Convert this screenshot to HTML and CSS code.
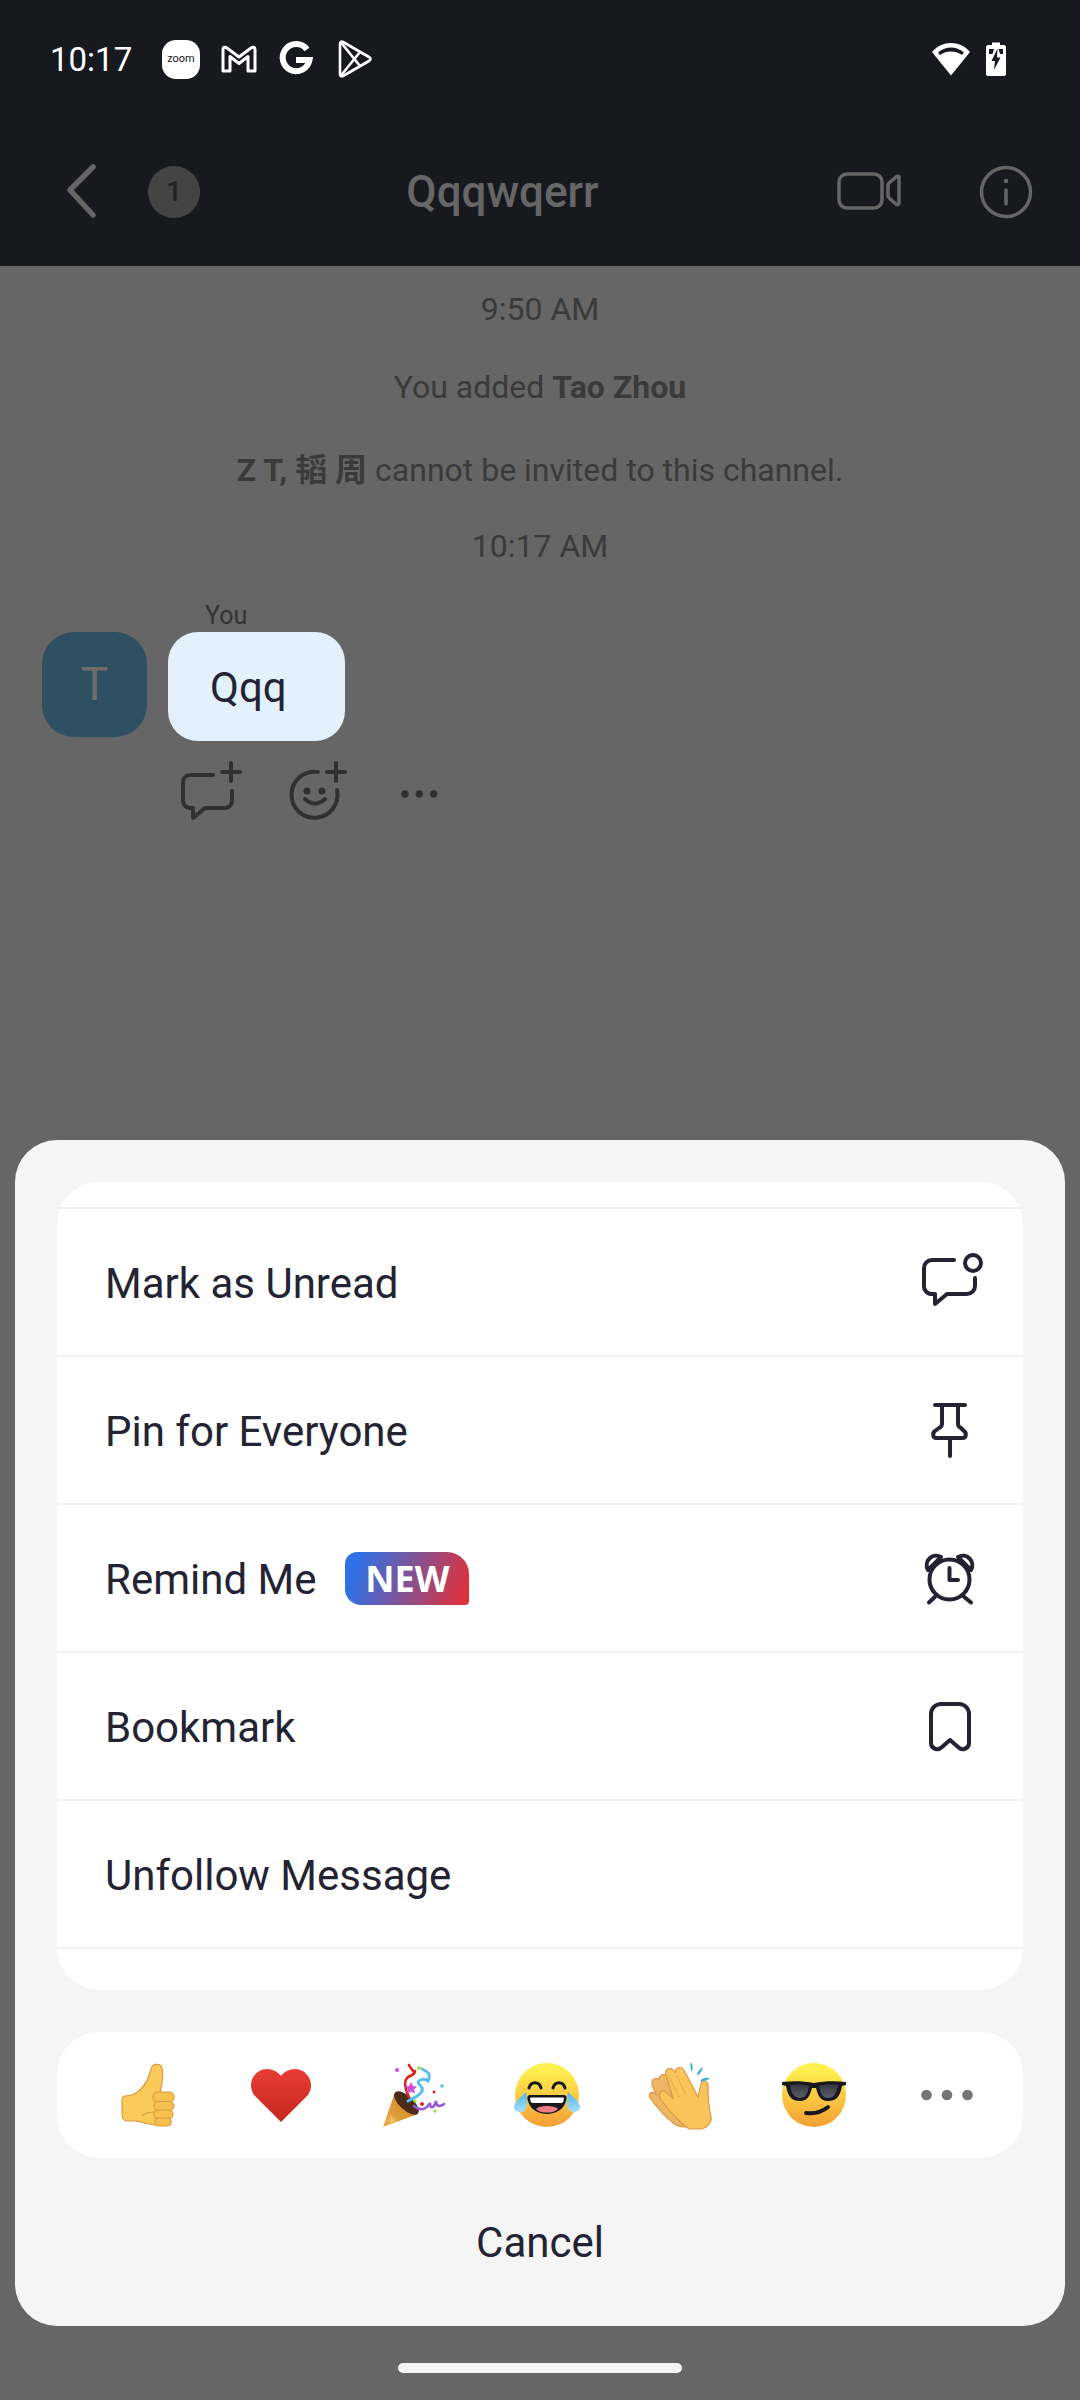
FILE: index.html
```html
<!DOCTYPE html>
<html lang="en">
<head>
    <meta charset="UTF-8">
    <meta name="viewport" content="width=device-width, initial-scale=1.0">
    <title>Qqqwqerr</title>
    <link rel="stylesheet" href="styles.css">
</head>
<body>
    <svg class="defs" aria-hidden="true">
        <defs>
            <linearGradient id="face" x1="0" y1="0" x2="0" y2="1">
                <stop offset="0.1" stop-color="#fff04f"/>
                <stop offset="1" stop-color="#f49e35"/>
            </linearGradient>
            <linearGradient id="heart" x1="0" y1="0" x2="0" y2="1">
                <stop offset="0" stop-color="#ea3d35"/>
                <stop offset="1" stop-color="#c4281b"/>
            </linearGradient>
            <linearGradient id="tear" x1="0" y1="0" x2="0" y2="1">
                <stop offset="0" stop-color="#4fb4ea"/>
                <stop offset="1" stop-color="#a8e0fb"/>
            </linearGradient>
            <linearGradient id="cone" x1="0" y1="1" x2="1" y2="0">
                <stop offset="0" stop-color="#eeb14a"/>
                <stop offset="1" stop-color="#c4791c"/>
            </linearGradient>
            <linearGradient id="lens" x1="0" y1="0" x2="0" y2="1">
                <stop offset="0" stop-color="#33353f"/>
                <stop offset="1" stop-color="#5b5d68"/>
            </linearGradient>
        </defs>
    </svg>

    <div class="topbar">
        <div class="statusbar">
            <span class="clock">10:17</span>
            <span class="zoom-icon">zoom</span>
            <svg class="st-gmail" width="36" height="28" viewBox="0 0 36 28" fill="none" stroke="#fff" stroke-width="3" stroke-linejoin="round">
                <path d="M2 4.5 C2 2 4 1.500 6 3 L18 12 L30 3 C32 1.500 34 2 34 4.500 V26 H27 V11.500 L18 18.500 L9 11.500 V26 H2 Z"/>
            </svg>
            <svg class="st-google" width="34" height="34" viewBox="0 0 34 34" fill="none" stroke="#fff" stroke-width="6">
                <path d="M28 7.500 A13.500 13.500 0 1 0 30.500 18 H17"/>
            </svg>
            <svg class="st-play" width="34" height="38" viewBox="0 0 34 38" fill="none" stroke="#fff" stroke-width="2.600" stroke-linejoin="round">
                <path d="M2 3.500 C2 2 3.500 1 5 2 L31 17 C33 18 33 20 31 21 L5 36 C3.500 37 2 36 2 34.500 Z"/>
                <path d="M3 2.500 L22 26 M3 35.500 L22 12"/>
            </svg>
            <span class="status-spacer"></span>
            <svg class="st-wifi" width="40" height="34" viewBox="0 0 40 34">
                <path fill="#fff" d="M20 33.500 L1 10 C6 4 13 1 20 1 C27 1 34 4 39 10 Z"/>
                <path fill="#17191f" d="M7 10.500 C11 7 15.500 5.500 20 5.500 C24.500 5.500 29 7 33 10.500 L31 13 C27.500 10.500 24 9.500 20 9.500 C16 9.500 12.500 10.500 9 13 Z"/>
            </svg>
            <svg class="st-battery" width="20" height="34" viewBox="0 0 20 34">
                <path fill="#fff" d="M6 0.500 H14 V3 H18 C19 3 20 4 20 5 V32 C20 33 19 34 18 34 H2 C1 34 0 33 0 32 V5 C0 4 1 3 2 3 H6 Z"/>
                <path fill="#17191f" d="M3 7 H8 L6.500 12 H3 Z M12.500 7 H17 V12 H14 Z"/>
                <path fill="#17191f" d="M11.500 6.500 L5.500 19 H9 L8 28 L14.500 15.500 H11 Z"/>
            </svg>
        </div>
        <div class="chat-header">
            <svg class="back-icon" width="34" height="58" viewBox="0 0 34 58" fill="none" stroke="#666" stroke-width="5.500" stroke-linecap="round" stroke-linejoin="round">
                <path d="M28 4 L5 27 L28 52"/>
            </svg>
            <span class="unread-badge">1</span>
            <h1 class="chat-title">Qqqwqerr</h1>
            <svg class="video-icon" width="64" height="40" viewBox="0 0 64 40" fill="none" stroke="#666" stroke-width="3.500" stroke-linejoin="round">
                <rect x="2" y="2" width="43" height="34" rx="8"/>
                <path d="M62 5 V31 C62 33 60 33 59 32 L52 26 C51 25 51 24 51 23 V14 C51 13 51 12 52 11 L59 5 C60 4 62 4 62 5 Z"/>
            </svg>
            <svg class="info-icon" width="54" height="54" viewBox="0 0 54 54" fill="none" stroke="#666" stroke-width="3.500" stroke-linecap="round">
                <circle cx="27" cy="27" r="24.500"/>
                <path d="M27 25 V39"/>
                <circle cx="27" cy="16" r="1.500" fill="#666" stroke-width="1.500"/>
            </svg>
        </div>
    </div>

    <div class="chat">
        <div class="time-line line-one">9:50 AM</div>
        <div class="time-line line-two">You added <b>Tao Zhou</b></div>
        <div class="time-line line-three"><b>Z T, 韬 周</b> cannot be invited to this channel.</div>
        <div class="time-line line-four">10:17 AM</div>
        <div class="msg-label">You</div>
        <div class="msg-row">
            <div class="avatar">T</div>
            <div class="bubble">Qqq</div>
        </div>
        <div class="msg-actions">
            <svg width="70" height="62" viewBox="0 0 70 62" fill="none" stroke="#303030" stroke-width="4" stroke-linecap="round" stroke-linejoin="round">
                <path d="M38 15H15a7 7 0 0 0-7 7v19a7 7 0 0 0 7 7h3v10l12-10h20a7 7 0 0 0 7-7V31"/>
                <path d="M47 12H65M56 3V21"/>
            </svg>
            <svg width="70" height="62" viewBox="0 0 70 62" fill="none" stroke="#303030" stroke-width="4" stroke-linecap="round">
                <path d="M33 12A23 23 0 1 0 52 30"/>
                <path d="M20 39Q30 48 40 39"/>
                <path d="M42 12H60M51 3V21"/>
                <circle cx="22" cy="31" r="3.500" fill="#303030" stroke="none"/>
                <circle cx="37" cy="31" r="3.500" fill="#303030" stroke="none"/>
            </svg>
            <svg width="48" height="62" viewBox="0 0 48 62" fill="#303030">
                <circle cx="10" cy="34" r="3.700"/>
                <circle cx="24.300" cy="34" r="3.700"/>
                <circle cx="38.700" cy="34" r="3.700"/>
            </svg>
        </div>
    </div>

    <div class="sheet">
        <div class="menu-card">
            <div class="menu-row">
                <span class="menu-label">Mark as Unread</span>
                <svg class="menu-icon" width="64" height="64" viewBox="0 0 64 64" fill="none" stroke="#232333" stroke-width="4" stroke-linecap="round" stroke-linejoin="round">
                    <path d="M37 10H15a8 8 0 0 0-8 8v17a8 8 0 0 0 8 9h3v10l12-10h20a8 8 0 0 0 8-8V28"/>
                    <circle cx="56" cy="13" r="8"/>
                </svg>
            </div>
            <div class="menu-row">
                <span class="menu-label">Pin for Everyone</span>
                <svg class="menu-icon" width="64" height="64" viewBox="0 0 64 64" fill="none" stroke="#232333" stroke-width="4" stroke-linecap="round" stroke-linejoin="round">
                    <path d="M18 7H48M25 7V26c0 2-1 3-3 4l-4 3c-3 2-2 7 1 7H46c3 0 4-5 1-7l-3-3c-2-1-3-2-3-4V7M33 40V58"/>
                </svg>
            </div>
            <div class="menu-row">
                <span class="menu-label">Remind Me</span>
                <span class="new-tag">NEW</span>
                <svg class="menu-icon" width="64" height="64" viewBox="0 0 64 64" fill="none" stroke="#232333" stroke-width="4" stroke-linecap="round" stroke-linejoin="round">
                    <circle cx="32.500" cy="33.500" r="20"/>
                    <path d="M32.500 22V34H41"/>
                    <path d="M11 24a9.500 9.500 0 0 1 13-13zM54 24a9.500 9.500 0 0 0-13-13z"/>
                    <path d="M12 56.500L18 50.700M54 56.500L47 50.700"/>
                </svg>
            </div>
            <div class="menu-row">
                <span class="menu-label">Bookmark</span>
                <svg class="menu-icon" width="64" height="64" viewBox="0 0 64 64" fill="none" stroke="#232333" stroke-width="4" stroke-linecap="round" stroke-linejoin="round">
                    <path d="M14 20a10 10 0 0 1 10-10h18a10 10 0 0 1 10 10v29c0 6-7 8-11 4l-8-7-8 7c-4 4-11 2-11-4z"/>
                </svg>
            </div>
            <div class="menu-row">
                <span class="menu-label">Unfollow Message</span>
            </div>
            <div class="menu-end"></div>
        </div>

        <div class="emoji-card">
            <span class="emoji-slot">
                <svg width="64" height="64" viewBox="0 0 64 64" stroke="#d69c45" stroke-width="1.200" fill="#f9c95a">
                    <path d="M9 33C19 33 30 26 35 6C36 1 44-1 46 5C48 12 46 22 44 30L46 62C38 63 28 60 20 58L11 58C7 58 6 55 6 50L6 38C6 35 7 33 9 33Z"/>
                    <path d="M26 53C30 50 34 49 38 49" fill="none"/>
                    <g fill="#f6bf4e">
                        <rect x="37" y="29" width="21" height="10" rx="4.500"/>
                        <rect x="38" y="38.500" width="20" height="9" rx="4.500"/>
                        <rect x="38" y="47" width="19" height="8.500" rx="4"/>
                        <rect x="39" y="55" width="16" height="8" rx="3.500"/>
                    </g>
                </svg>
            </span>
            <span class="emoji-slot">
                <svg width="64" height="64" viewBox="0 0 64 64">
                    <path fill="url(#heart)" d="M32 59L5 32C-3 20 6 6 18 6C24 6 29 9 32 13C35 9 40 6 46 6C58 6 67 20 59 32Z"/>
                </svg>
            </span>
            <span class="emoji-slot">
                <svg width="64" height="64" viewBox="0 0 64 64" fill="none">
                    <path fill="url(#cone)" d="M1 64L13 29L36 51Z"/>
                    <path fill="#f6d27c" opacity="0.5" d="M9 52l2 3 3-1-1 3 2 3-4-1-2 3-1-3-3-1 3-2z"/>
                    <ellipse cx="24.500" cy="40" rx="15.500" ry="7" transform="rotate(43 24.500 40)" fill="#4a2a18"/>
                    <path d="M27 34C21 22 22 14 30 12C36 10 28 6 27 2M27 14C30 12 34 10 33 8" stroke="#d7281f" stroke-width="2.600" stroke-linecap="round"/>
                    <path d="M26 38C38 32 44 28 38 22C32 18 42 14 46 18C50 10 44 8 40 6" stroke="#59bfee" stroke-width="3" stroke-linecap="round"/>
                    <path d="M32 43C40 50 46 44 48 40C48 46 52 46 54 38C54 44 58 44 62 41" stroke="#9358dc" stroke-width="2.600" stroke-linecap="round"/>
                    <path fill="#d04be0" d="M29 19l2 4 4 .500-3 3 1 4-4-2-4 2 1-4-3-3 4-.500z"/>
                    <circle cx="15" cy="7" r="2" fill="#d04be0"/>
                    <circle cx="37" cy="5" r="2" fill="#a8e04a"/>
                    <circle cx="60" cy="23" r="1.800" fill="#59bfee"/>
                    <circle cx="52" cy="29" r="1.500" fill="#d7281f"/>
                    <circle cx="40" cy="41" r="2" fill="#d7281f"/>
                    <circle cx="33" cy="38" r="1.800" fill="#a8e04a"/>
                    <circle cx="53" cy="48" r="1.800" fill="#a8e04a"/>
                </svg>
            </span>
            <span class="emoji-slot">
                <svg width="66" height="64" viewBox="0 0 66 64" fill="none">
                    <circle cx="33" cy="32" r="32" fill="url(#face)"/>
                    <path d="M15 25C17 18 25 18 27 25M39 25C41 18 49 18 51 25" stroke="#17171c" stroke-width="3" stroke-linecap="round"/>
                    <path fill="#17171c" d="M16 32H50C53 32 53 35 52 38C50 46 42 51 33 51C24 51 16 46 14 38C13 35 13 32 16 32Z"/>
                    <path fill="#fff" d="M17 34.500H49C50 34.500 50 36 49.500 38C49 39.500 48 40 47 40H19C18 40 17 39.500 16.500 38C16 36 16 34.500 17 34.500Z"/>
                    <path fill="#ee7c86" d="M22 46C25 42 41 42 44 46C41 49 37 49.500 33 49.500C29 49.500 25 49 22 46Z"/>
                    <path fill="url(#tear)" d="M12 29C6 35 0 39 0 44C0 49 8 51 11 47C14 43 13 36 12 29Z"/>
                    <path fill="url(#tear)" d="M54 29C60 35 66 39 66 44C66 49 58 51 55 47C52 43 53 36 54 29Z"/>
                </svg>
            </span>
            <span class="emoji-slot">
                <svg width="64" height="68" viewBox="0 0 64 68" fill="none">
                    <path fill="#eeb663" stroke="#d99a4a" stroke-width="1.200" d="M1 37C-1 33 2 30 5 32L8 34C3 26 1 20 5 18C7 17 9 17 10 19C10 14 14 12 18 15L30 60L36 66C30 66 26 64 22 60C14 54 8 46 1 37Z"/>
                    <path fill="#f9c45a" stroke="#d99a4a" stroke-width="1.200" d="M12 39C8 33 12 28 17 31L24 37L17 14C15 8 22 5 25 10L26 12C26 6 32 5 35 9L49 36L52 23C53 18 58 19 59 24C59 32 59 44 62 56C63 62 58 67 52 68H40C32 62 22 52 12 39Z"/>
                    <path d="M27 14L37 34M20 16L30 36" stroke="#e3a94e" stroke-width="1"/>
                    <path fill="#3eb0d8" d="M42 1C44 4 44 8 43 11C41 8 41 4 42 1ZM54 6C53 10 51 13 48 15C48 11 50 8 54 6ZM61 17C59 19 55 21 51 20C53 17 57 16 61 17Z"/>
                </svg>
            </span>
            <span class="emoji-slot">
                <svg width="64" height="64" viewBox="0 0 64 64" fill="none">
                    <circle cx="32" cy="32" r="32" fill="url(#face)"/>
                    <path d="M0 19C10 18 22 18 32 20C42 18 54 18 64 19V22L60 23C58 34 54 38 46 38C38 38 36 32 34 25H30C28 32 26 38 18 38C10 38 6 34 4 23L0 22Z" fill="#17171c"/>
                    <path fill="url(#lens)" d="M8 22C14 21 21 21 27 23C26 31 23 35 18 35C12 35 9 30 8 22ZM37 23C43 21 50 21 56 22C55 30 52 35 46 35C41 35 38 31 37 23Z"/>
                    <path d="M24 50C32 51 40 49 46 44" stroke="#17171c" stroke-width="4" stroke-linecap="round"/>
                </svg>
            </span>
            <span class="emoji-slot">
                <svg width="64" height="16" viewBox="0 0 64 16" fill="#747478">
                    <circle cx="11.500" cy="8" r="5.300"/>
                    <circle cx="32" cy="8" r="5.300"/>
                    <circle cx="52.500" cy="8" r="5.300"/>
                </svg>
            </span>
        </div>

        <div class="cancel">Cancel</div>
    </div>

    <div class="home-bar"></div>
</body>
</html>
```

FILE: styles.css
```css
* {
    box-sizing: border-box;
}
html, body {
    margin: 0;
    padding: 0;
}
body {
    width: 1080px;
    height: 2400px;
    overflow: hidden;
    font-family: Roboto, "Noto Sans CJK SC", sans-serif;
    background-color: #666;
    color: #232333;
}
.defs {
    position: absolute;
    width: 0;
    height: 0;
}
svg {
    display: block;
    flex: none;
    overflow: visible;
}

/* status bar + header */
.topbar {
    height: 266px;
    background-color: #17191f;
}
.statusbar {
    height: 118px;
    padding: 0 0 0 50px;
    display: flex;
    align-items: center;
    color: white;
}
.clock {
    width: 112px;
    font-size: 33px;
}
.zoom-icon {
    width: 38px;
    height: 39px;
    border-radius: 14px;
    background-color: white;
    color: #17191f;
    font-size: 11px;
    line-height: 38px;
    text-align: center;
}
.st-gmail {
    margin-left: 21px;
}
.st-google {
    margin-left: 22px;
}
.st-play {
    margin-left: 25px;
}
.status-spacer {
    flex: 1;
}
.st-wifi {
    margin-right: 15px;
}
.st-battery {
    margin-right: 74px;
}
.chat-header {
    height: 148px;
    display: flex;
    align-items: center;
}
.back-icon {
    margin-left: 65px;
}
.unread-badge {
    margin-left: 49px;
    width: 52px;
    height: 52px;
    border-radius: 50%;
    background-color: #444;
    color: #222;
    font-size: 28px;
    font-weight: 500;
    line-height: 52px;
    text-align: center;
}
.chat-title {
    flex: 1;
    margin: 0 32px 0 0;
    font-size: 44px;
    font-weight: 500;
    color: #666;
    text-align: center;
}
.video-icon {
    margin-right: 78px;
}
.info-icon {
    margin-right: 47px;
}

/* chat behind the sheet */
.chat {
    height: 874px;
    padding-top: 23px;
}
.time-line {
    height: 40px;
    line-height: 40px;
    font-size: 32px;
    text-align: center;
    color: #3a3a3a;
}
.line-two {
    margin-top: 38px;
}
.line-three {
    margin-top: 43px;
}
.line-four {
    margin-top: 36px;
}
.msg-label {
    margin: 34px 0 2px 205px;
    height: 30px;
    line-height: 32px;
    font-size: 25px;
    color: #333;
}
.msg-row {
    display: flex;
    align-items: flex-start;
    padding-left: 42px;
    gap: 21px;
}
.avatar {
    width: 105px;
    height: 105px;
    border-radius: 32px;
    background-color: #2f4f63;
    color: #6d6d6d;
    font-size: 46px;
    line-height: 105px;
    text-align: center;
}
.bubble {
    width: 177px;
    height: 109px;
    padding-left: 42px;
    border-radius: 30px;
    background-color: #e3f1ff;
    font-size: 42px;
    line-height: 111px;
}
.msg-actions {
    display: flex;
    margin: 19px 0 0 175px;
    gap: 40px;
}

/* bottom sheet */
.sheet {
    height: 1186px;
    margin: 0 15px;
    padding: 42px;
    border-radius: 42px;
    background-color: #f5f5f5;
}
.menu-card {
    height: 808px;
    padding-top: 25px;
    border-radius: 42px;
    background-color: white;
}
.menu-row {
    height: 148px;
    padding: 0 42px 0 48px;
    display: flex;
    align-items: center;
    border-top: 2px solid #f1f2f5;
    font-size: 42px;
}
.menu-label {
    padding-top: 3px;
}
.menu-end {
    border-top: 2px solid #f1f2f5;
}
.menu-icon {
    margin-left: auto;
}
.new-tag {
    margin-left: 29px;
    width: 124px;
    height: 53px;
    border-radius: 12px 22px 4px 16px;
    background: linear-gradient(110deg, #2f71e4 12%, #d93340 92%);
    color: white;
    font-family: "Open Sans", sans-serif;
    font-size: 36px;
    font-weight: 700;
    line-height: 53px;
    text-align: center;
}
.emoji-card {
    height: 126px;
    margin-top: 42px;
    padding: 0 9px 0 24px;
    display: grid;
    grid-template-columns: repeat(7, 1fr);
    align-items: center;
    justify-items: center;
    border-radius: 42px;
    background-color: white;
}
.cancel {
    margin-top: 44px;
    text-align: center;
    font-size: 42px;
    line-height: 82px;
}
.home-bar {
    width: 284px;
    height: 10px;
    margin: 37px auto 0;
    border-radius: 5px;
    background-color: #f4f4f4;
}
```
